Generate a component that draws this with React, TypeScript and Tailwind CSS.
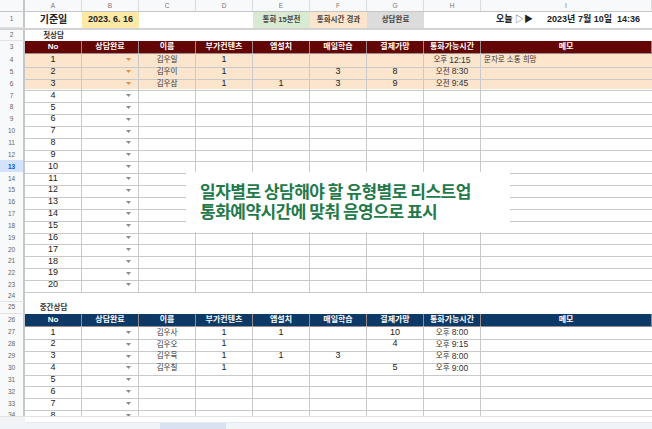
import React from "react";

type Rec = {
  no: number;
  name?: string;
  d?: string;
  e?: string;
  f?: string;
  g?: string;
  h?: string;
  memo?: string;
};

const GRID = "grid grid-cols-[25px_57px_57px_57px_57px_57px_57px_57px_57px_1fr]";
const HEADS = ["No", "상담완료", "이름", "부가컨텐츠", "앱설치", "매일학습", "결제가망", "통화가능시간", "메모"];

const first: Rec[] = [
  { no: 1, name: "김우일", d: "1", h: "오후|12:15", memo: "문자로 소통 희망" },
  { no: 2, name: "김우이", d: "1", f: "3", g: "8", h: "오전|8:30" },
  { no: 3, name: "김우삼", d: "1", e: "1", f: "3", g: "9", h: "오전|9:45" },
  ...Array.from({ length: 17 }, (_, i) => ({ no: i + 4 })),
];

const middle: Rec[] = [
  { no: 1, name: "김우사", d: "1", e: "1", g: "10", h: "오후|8:00" },
  { no: 2, name: "김우오", d: "1", g: "4", h: "오후|9:15" },
  { no: 3, name: "김우육", d: "1", e: "1", f: "3", h: "오후|8:00" },
  { no: 4, name: "김우칠", d: "1", g: "5", h: "오후|9:00" },
  ...Array.from({ length: 4 }, (_, i) => ({ no: i + 5 })),
];

export default function App() {
  return (
    <div className="flex h-[429px] w-[652px] flex-col overflow-hidden bg-white font-['Liberation_Sans','Noto_Sans_CJK_KR',sans-serif] text-[#222]">
      <div className="relative h-[416px] overflow-hidden">
        {/* column letters */}
        <div className={`${GRID} h-[12px] border-b border-[#c4c7c5] bg-[#f8f9fa]`}>
          <div className="border-r-[2px] border-[#c4c7c5]" />
          {["A", "B", "C", "D", "E", "F", "G", "H", "I"].map((c) => (
            <div key={c} className="flex items-center justify-center border-r border-[#dadce0] text-[6.5px] text-[#777]">
              {c}
            </div>
          ))}
        </div>

        {/* row 1 */}
        <div className={`${GRID} h-[17.5px] border-b-[2px] border-[#d3d3d3]`}>
          <RowNum n={1} />
          <div className="flex items-center justify-center text-[10px] font-bold">기준일</div>
          <div className="flex items-center justify-center bg-[#fde9a6] text-[9px] font-bold">2023. 6. 16</div>
          <div />
          <div />
          <div className="flex items-center justify-center bg-[#d9ead3] text-[7.5px] font-bold text-[#444]">통화 15분전</div>
          <div className="flex items-center justify-center bg-[#fce5cd] text-[7.5px] font-bold text-[#444]">통화시간 경과</div>
          <div className="flex items-center justify-center bg-[#dcdcdc] text-[7.5px] font-bold text-[#444]">상담완료</div>
          <div className="col-span-2 flex items-center justify-end gap-[14px] pr-[12px] text-[9px] font-bold">
            <span>
              오늘 <span className="font-normal text-[#555]">▷</span>▶
            </span>
            <span className="whitespace-pre">2023년 7월 10일  14:36</span>
          </div>
        </div>

        {/* row 2 */}
        <Title n={2} text="첫상담" />
        <HeadRow n={3} bg="bg-[#640404]" />
        {first.map((r, i) => (
          <DataRow key={r.no} n={i + 4} rec={r} peach={i < 3} active={i + 4 === 13} />
        ))}

        {/* row 24, 25 */}
        <div className={`${GRID} h-[11.85px]`}>
          <RowNum n={24} />
        </div>
        <Title n={25} text="중간상담" />
        <HeadRow n={26} bg="bg-[#0c3966]" />
        {middle.map((r, i) => (
          <DataRow key={r.no} n={i + 27} rec={r} />
        ))}

        {/* annotation */}
        <div className="absolute left-[186px] top-[172px] flex h-[60px] w-[324px] flex-col gap-[1px] bg-white pl-[14px] pt-[9px] font-['Noto_Sans_CJK_KR',sans-serif] text-[17px] font-bold leading-[19px] tracking-[-0.5px] text-[#23794a]">
          <div>일자별로 상담해야 할 유형별로 리스트업</div>
          <div>통화예약시간에 맞춰 음영으로 표시</div>
        </div>
      </div>

      {/* bottom scroll area */}
      <div className="flex h-[7px] border-t border-[#e3e3e3]">
        <div className="w-[25px] bg-[#f1f3f4]" />
        <div className="flex-1 border-b border-[#e6e9ee] bg-white" />
      </div>
      <div className="flex h-[6px] bg-[#f0f4f9]">
        <div className="ml-[160px] w-[66px] bg-[#d9e2f0]" />
      </div>
    </div>
  );
}

function RowNum({ n, active = false }: { n: number; active?: boolean }) {
  return (
    <div
      className={`flex items-center justify-center border-r-[2px] border-b border-r-[#c4c7c5] border-b-[#e3e3e3] text-[6.5px] ${
        active ? "bg-[#d3e3fd] font-bold text-[#0b57d0]" : "bg-[#f8f9fa] text-[#666]"
      }`}
    >
      {n}
    </div>
  );
}

function Title({ n, text }: { n: number; text: string }) {
  return (
    <div className={`${GRID} h-[11.85px]`}>
      <RowNum n={n} />
      <div className="flex items-center justify-center text-[7.5px] font-bold text-[#333]">{text}</div>
    </div>
  );
}

function HeadRow({ n, bg }: { n: number; bg: string }) {
  return (
    <div className={`${GRID} h-[11.85px]`}>
      <RowNum n={n} />
      {HEADS.map((h) => (
        <div
          key={h}
          className={`flex items-center justify-center border-r border-b border-[#9a8a8a] ${bg} text-[8px] font-bold text-white`}
        >
          {h}
        </div>
      ))}
    </div>
  );
}

function Num({ v }: { v?: string }) {
  return <div className="flex items-center justify-center border-r border-b border-[#c9c9c9] text-[9px]">{v}</div>;
}

function DataRow({ n, rec, peach = false, active = false }: { n: number; rec: Rec; peach?: boolean; active?: boolean }) {
  const [ampm, time] = rec.h ? rec.h.split("|") : ["", ""];
  return (
    <div className={`${GRID} h-[11.85px] ${peach ? "bg-[#fce5cd]" : "bg-white"}`}>
      <RowNum n={n} active={active} />
      <Num v={String(rec.no)} />
      <div className="flex items-center justify-end border-r border-b border-[#c9c9c9] pr-[7px]">
        <svg width="5" height="3" viewBox="0 0 5 3">
          <path d="M0 0h5L2.5 3z" fill={peach ? "#e08a45" : "#8a8a8a"} />
        </svg>
      </div>
      <div className="flex items-center justify-center border-r border-b border-[#c9c9c9] text-[7.5px] text-[#333]">
        {rec.name}
      </div>
      <Num v={rec.d} />
      <Num v={rec.e} />
      <Num v={rec.f} />
      <Num v={rec.g} />
      <div className="flex items-center justify-center gap-[2px] border-r border-b border-[#c9c9c9] text-[#333]">
        <span className="text-[7.5px]">{ampm}</span>
        <span className="text-[8.5px]">{time}</span>
      </div>
      <div className="flex items-center border-b border-[#c9c9c9] pl-[3px] text-[7.5px] text-[#333]">{rec.memo}</div>
    </div>
  );
}
